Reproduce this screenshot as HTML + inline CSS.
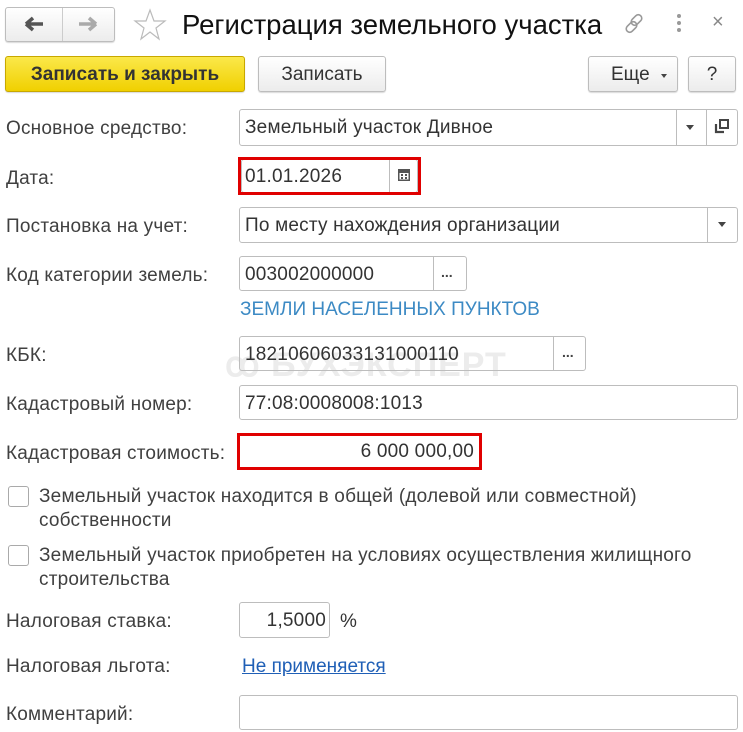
<!DOCTYPE html>
<html><head><meta charset="utf-8"><style>
*{box-sizing:border-box;margin:0;padding:0}
body{width:743px;height:732px;background:#fff;font-family:"Liberation Sans",Arial,sans-serif;color:#333;position:relative;overflow:hidden;font-size:19px}
.a{position:absolute}
.lbl{position:absolute;left:6px;font-size:19px;line-height:20px;color:#404040;letter-spacing:.2px;white-space:nowrap;margin-top:2px}
.f{position:absolute;border:1px solid #bdbdbd;border-radius:3px;background:#fff;font-size:19px;line-height:20px;padding:8px 5px 6px;color:#333;letter-spacing:.2px;white-space:nowrap}
.sep{position:absolute;top:0;bottom:0;border-left:1px solid #bdbdbd}
.btn{position:absolute;border:1px solid #bdbdbd;border-radius:3px;background:linear-gradient(#fff,#ececec);box-shadow:0 1px 1px rgba(0,0,0,.15);font-size:19px;text-align:center;line-height:35px;color:#333}
.tri{position:absolute;width:0;height:0;border-left:4px solid transparent;border-right:4px solid transparent;border-top:5px solid #444}
.red{position:absolute;border:3px solid #e00000}
.cb{position:absolute;left:8px;width:21px;height:21px;border:1px solid #aaa;border-radius:3px;background:#fff}
</style></head><body>
<div class="btn" style="left:5px;top:7px;width:110px;height:35px"></div>
<div class="a" style="left:62px;top:8px;height:33px;border-left:1px solid #ccc"></div>
<svg class="a" style="left:24px;top:15px" width="22" height="18"><path d="M2 9H19M2 9L9 3M2 9L9 15" stroke="#555" stroke-width="3.5" fill="none"/></svg>
<svg class="a" style="left:76px;top:15px" width="22" height="18"><path d="M20 9H3M20 9L13 3M20 9L13 15" stroke="#aaa" stroke-width="3.5" fill="none"/></svg>
<svg class="a" style="left:133px;top:8px" width="34" height="34"><path d="M17 2L21 13L32 13L23 20L26 31L17 24L8 31L11 20L2 13L13 13Z" fill="none" stroke="#bbb" stroke-width="1.2"/></svg>
<div class="a" style="left:182px;top:8px;font-size:27.5px;line-height:34px;color:#111;white-space:nowrap">Регистрация земельного участка</div>
<svg class="a" style="left:623px;top:12px" width="24" height="24"><g stroke="#999" stroke-width="1.6" fill="none"><rect x="10" y="2" width="7" height="12" rx="3.5" transform="rotate(45 13.5 8)"/><rect x="5" y="9" width="7" height="12" rx="3.5" transform="rotate(45 8.5 15)"/></g></svg>
<div class="a" style="left:677px;top:14px;width:5px"><div style="width:4px;height:4px;background:#999;border-radius:2px;margin-bottom:3px"></div><div style="width:4px;height:4px;background:#999;border-radius:2px;margin-bottom:3px"></div><div style="width:4px;height:4px;background:#999;border-radius:2px"></div></div>
<div class="a" style="left:712px;top:11px;font-size:20px;color:#888">×</div>
<div class="btn" style="left:5px;top:56px;width:240px;height:36px;background:linear-gradient(#fbe84a,#f0d000);border-color:#c8a800;font-weight:bold;color:#333">Записать и закрыть</div>
<div class="btn" style="left:258px;top:56px;width:128px;height:36px">Записать</div>
<div class="btn" style="left:588px;top:56px;width:90px;height:36px;text-align:left;padding-left:22px">Еще</div>
<div class="tri" style="left:661px;top:74px;border-top-width:4px;border-left-width:3px;border-right-width:3px"></div>
<div class="btn" style="left:688px;top:56px;width:48px;height:36px">?</div>

<div class="lbl" style="top:117px">Основное средство:</div>
<div class="f" style="left:239px;top:109px;width:499px;height:37px">Земельный участок Дивное<div class="sep" style="left:436px"></div><div class="sep" style="left:466px"></div></div>
<div class="tri" style="left:686px;top:125px"></div>
<svg class="a" style="left:714px;top:118px" width="16" height="16"><path d="M2 6V14H10" stroke="#444" stroke-width="2.2" fill="none"/><rect x="6" y="2" width="8" height="8" stroke="#444" stroke-width="2" fill="none"/></svg>

<div class="lbl" style="top:167px">Дата:</div>
<div class="f" style="left:241px;top:159px;width:177px;height:34px;padding:7px 3px">01.01.2026<div class="sep" style="left:147px"></div></div>
<svg class="a" style="left:397px;top:167px" width="14" height="15"><rect x="1" y="2" width="12" height="12" fill="#555"/><rect x="2.5" y="6" width="9" height="6.5" fill="#fff"/><g fill="#555"><rect x="4" y="7" width="2" height="2"/><rect x="8" y="7" width="2" height="2"/><rect x="4" y="10" width="2" height="2"/><rect x="8" y="10" width="2" height="2"/></g></svg>
<div class="red" style="left:238px;top:157px;width:183px;height:38px"></div>

<div class="lbl" style="top:215px">Постановка на учет:</div>
<div class="f" style="left:239px;top:207px;width:499px;height:36px">По месту нахождения организации<div class="sep" style="left:467px"></div></div>
<div class="tri" style="left:718px;top:222px"></div>

<div class="lbl" style="top:264px">Код категории земель:</div>
<div class="f" style="left:239px;top:256px;width:228px;height:35px">003002000000<div class="sep" style="left:193px"></div></div>
<div class="a" style="left:441px;top:264px;font-weight:bold;font-size:14px;color:#444">...</div>
<div class="a" style="left:240px;top:300px;font-size:19px;line-height:20px;color:#3c8ac4;white-space:nowrap">ЗЕМЛИ НАСЕЛЕННЫХ ПУНКТОВ</div>

<div class="a" style="left:225px;top:345px;font-size:34px;font-weight:bold;color:#ececec;letter-spacing:1px;white-space:nowrap">ꝏ БУХЭКСПЕРТ</div>
<div class="lbl" style="top:344px">КБК:</div>
<div class="f" style="left:239px;top:336px;width:347px;height:35px;background:transparent">18210606033131000110<div class="sep" style="left:313px"></div></div>
<div class="a" style="left:562px;top:344px;font-weight:bold;font-size:14px;color:#444">...</div>

<div class="lbl" style="top:393px">Кадастровый номер:</div>
<div class="f" style="left:239px;top:385px;width:499px;height:35px">77:08:0008008:1013</div>

<div class="lbl" style="top:442px">Кадастровая стоимость:</div>
<div class="f" style="left:240px;top:436px;width:239px;height:31px;text-align:right;border:none;padding:6px 5px">6 000 000,00</div>
<div class="red" style="left:237px;top:433px;width:245px;height:37px"></div>

<div class="cb" style="top:486px"></div>
<div class="a" style="left:39px;top:485px;font-size:19px;line-height:24px;color:#404040;letter-spacing:.2px;white-space:nowrap">Земельный участок находится в общей (долевой или совместной)<br>собственности</div>
<div class="cb" style="top:545px"></div>
<div class="a" style="left:39px;top:544px;font-size:19px;line-height:24px;color:#404040;letter-spacing:.2px;white-space:nowrap">Земельный участок приобретен на условиях осуществления жилищного<br>строительства</div>

<div class="lbl" style="top:610px">Налоговая ставка:</div>
<div class="f" style="left:239px;top:602px;width:91px;height:36px;text-align:right;padding-right:3px">1,5000</div>
<div class="a" style="left:340px;top:612px;font-size:19px;line-height:20px">%</div>

<div class="lbl" style="top:655px">Налоговая льгота:</div>
<div class="a" style="left:242px;top:657px;font-size:19px;line-height:20px;color:#1f5fb6;text-decoration:underline;white-space:nowrap">Не применяется</div>

<div class="lbl" style="top:703px">Комментарий:</div>
<div class="f" style="left:239px;top:695px;width:499px;height:35px"></div>
</body></html>
